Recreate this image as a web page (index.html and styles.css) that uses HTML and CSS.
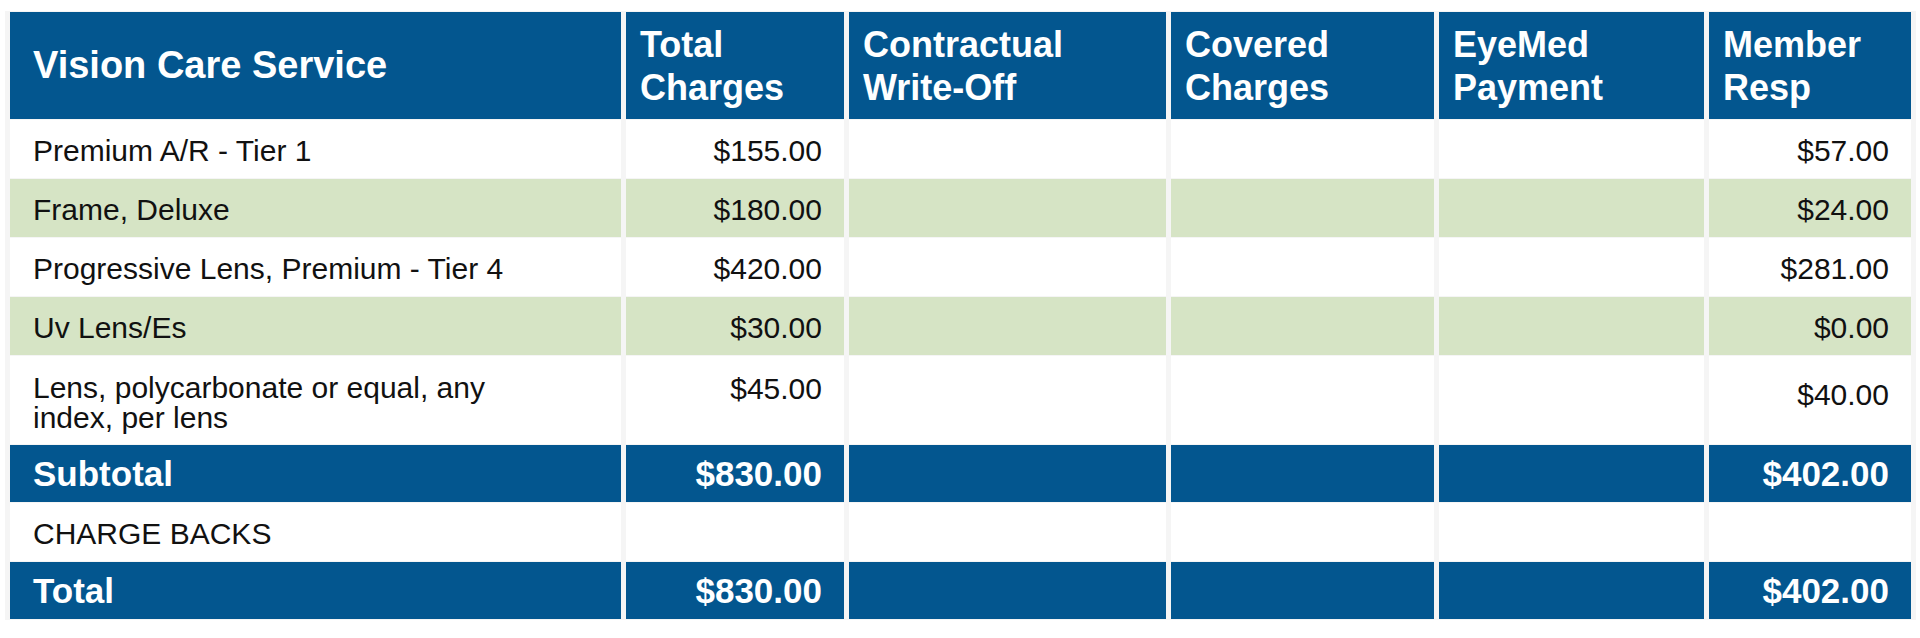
FILE: index.html
```html
<!DOCTYPE html>
<html lang="en">
<head>
<meta charset="utf-8">
<title>Vision Care Service</title>
<link rel="stylesheet" href="styles.css">
</head>
<body>
<table class="claims">
  <colgroup>
    <col class="c-service">
    <col class="c-total">
    <col class="c-write">
    <col class="c-covered">
    <col class="c-pay">
    <col class="c-member">
  </colgroup>
  <thead>
    <tr class="head">
      <th class="first">Vision Care Service</th>
      <th>Total<br>Charges</th>
      <th>Contractual<br>Write-Off</th>
      <th>Covered<br>Charges</th>
      <th>EyeMed<br>Payment</th>
      <th>Member<br>Resp</th>
    </tr>
  </thead>
  <tbody>
    <tr class="line">
      <td class="first">Premium A/R - Tier 1</td>
      <td class="num">$155.00</td><td></td><td></td><td></td>
      <td class="num">$57.00</td>
    </tr>
    <tr class="line alt">
      <td class="first">Frame, Deluxe</td>
      <td class="num">$180.00</td><td></td><td></td><td></td>
      <td class="num">$24.00</td>
    </tr>
    <tr class="line">
      <td class="first">Progressive Lens, Premium - Tier 4</td>
      <td class="num">$420.00</td><td></td><td></td><td></td>
      <td class="num">$281.00</td>
    </tr>
    <tr class="line alt">
      <td class="first">Uv Lens/Es</td>
      <td class="num">$30.00</td><td></td><td></td><td></td>
      <td class="num">$0.00</td>
    </tr>
    <tr class="line tall">
      <td class="first wrap">Lens, polycarbonate or equal, any<br>index, per lens</td>
      <td class="num top">$45.00</td><td></td><td></td><td></td>
      <td class="num top low">$40.00</td>
    </tr>
    <tr class="sum">
      <td class="first">Subtotal</td>
      <td class="num">$830.00</td><td></td><td></td><td></td>
      <td class="num">$402.00</td>
    </tr>
    <tr class="line">
      <td class="first">CHARGE BACKS</td>
      <td></td><td></td><td></td><td></td><td></td>
    </tr>
    <tr class="sum total">
      <td class="first">Total</td>
      <td class="num">$830.00</td><td></td><td></td><td></td>
      <td class="num">$402.00</td>
    </tr>
  </tbody>
</table>
</body>
</html>
```

FILE: styles.css
```css
html, body {
  margin: 0;
  padding: 0;
  background: #ffffff;
}

body {
  font-family: "Liberation Sans", Arial, sans-serif;
  color: #111111;
}

.claims {
  margin: 11px 0 0 5px;
  width: 1911px;
  table-layout: fixed;
  border-collapse: separate;
  border-spacing: 5px 1px;
  background: #f5f5f5;
}

.c-service { width: 611px; }
.c-total { width: 218px; }
.c-write { width: 317px; }
.c-covered { width: 263px; }
.c-pay { width: 265px; }
.c-member { width: 202px; }

.claims th,
.claims td {
  padding: 0 14px;
  vertical-align: middle;
}

.claims .first {
  padding-left: 23px;
}

.head {
  height: 107px;
}

.head th {
  background: #03568f;
  color: #ffffff;
  font-weight: bold;
  font-size: 36px;
  line-height: 43px;
  text-align: left;
}

.head th.first {
  font-size: 38px;
}

.line td {
  background: #ffffff;
  font-size: 30px;
  line-height: 34px;
  padding-top: 4px;
}

.line {
  height: 58px;
}

.line.alt td {
  background: #d6e4c5;
}

.line.tall {
  height: 88px;
}

.claims .wrap {
  vertical-align: top;
  line-height: 30px;
  padding-top: 17px;
  padding-bottom: 0;
}

.claims .num {
  text-align: right;
  padding-right: 22px;
}

.claims .top {
  vertical-align: top;
  padding-top: 16px;
}

.claims .low {
  padding-top: 22px;
}

.sum {
  height: 57px;
}

.sum.total {
  height: 57px;
}

.sum td {
  background: #03568f;
  color: #ffffff;
  font-weight: bold;
  font-size: 35px;
  line-height: 38px;
}
```
